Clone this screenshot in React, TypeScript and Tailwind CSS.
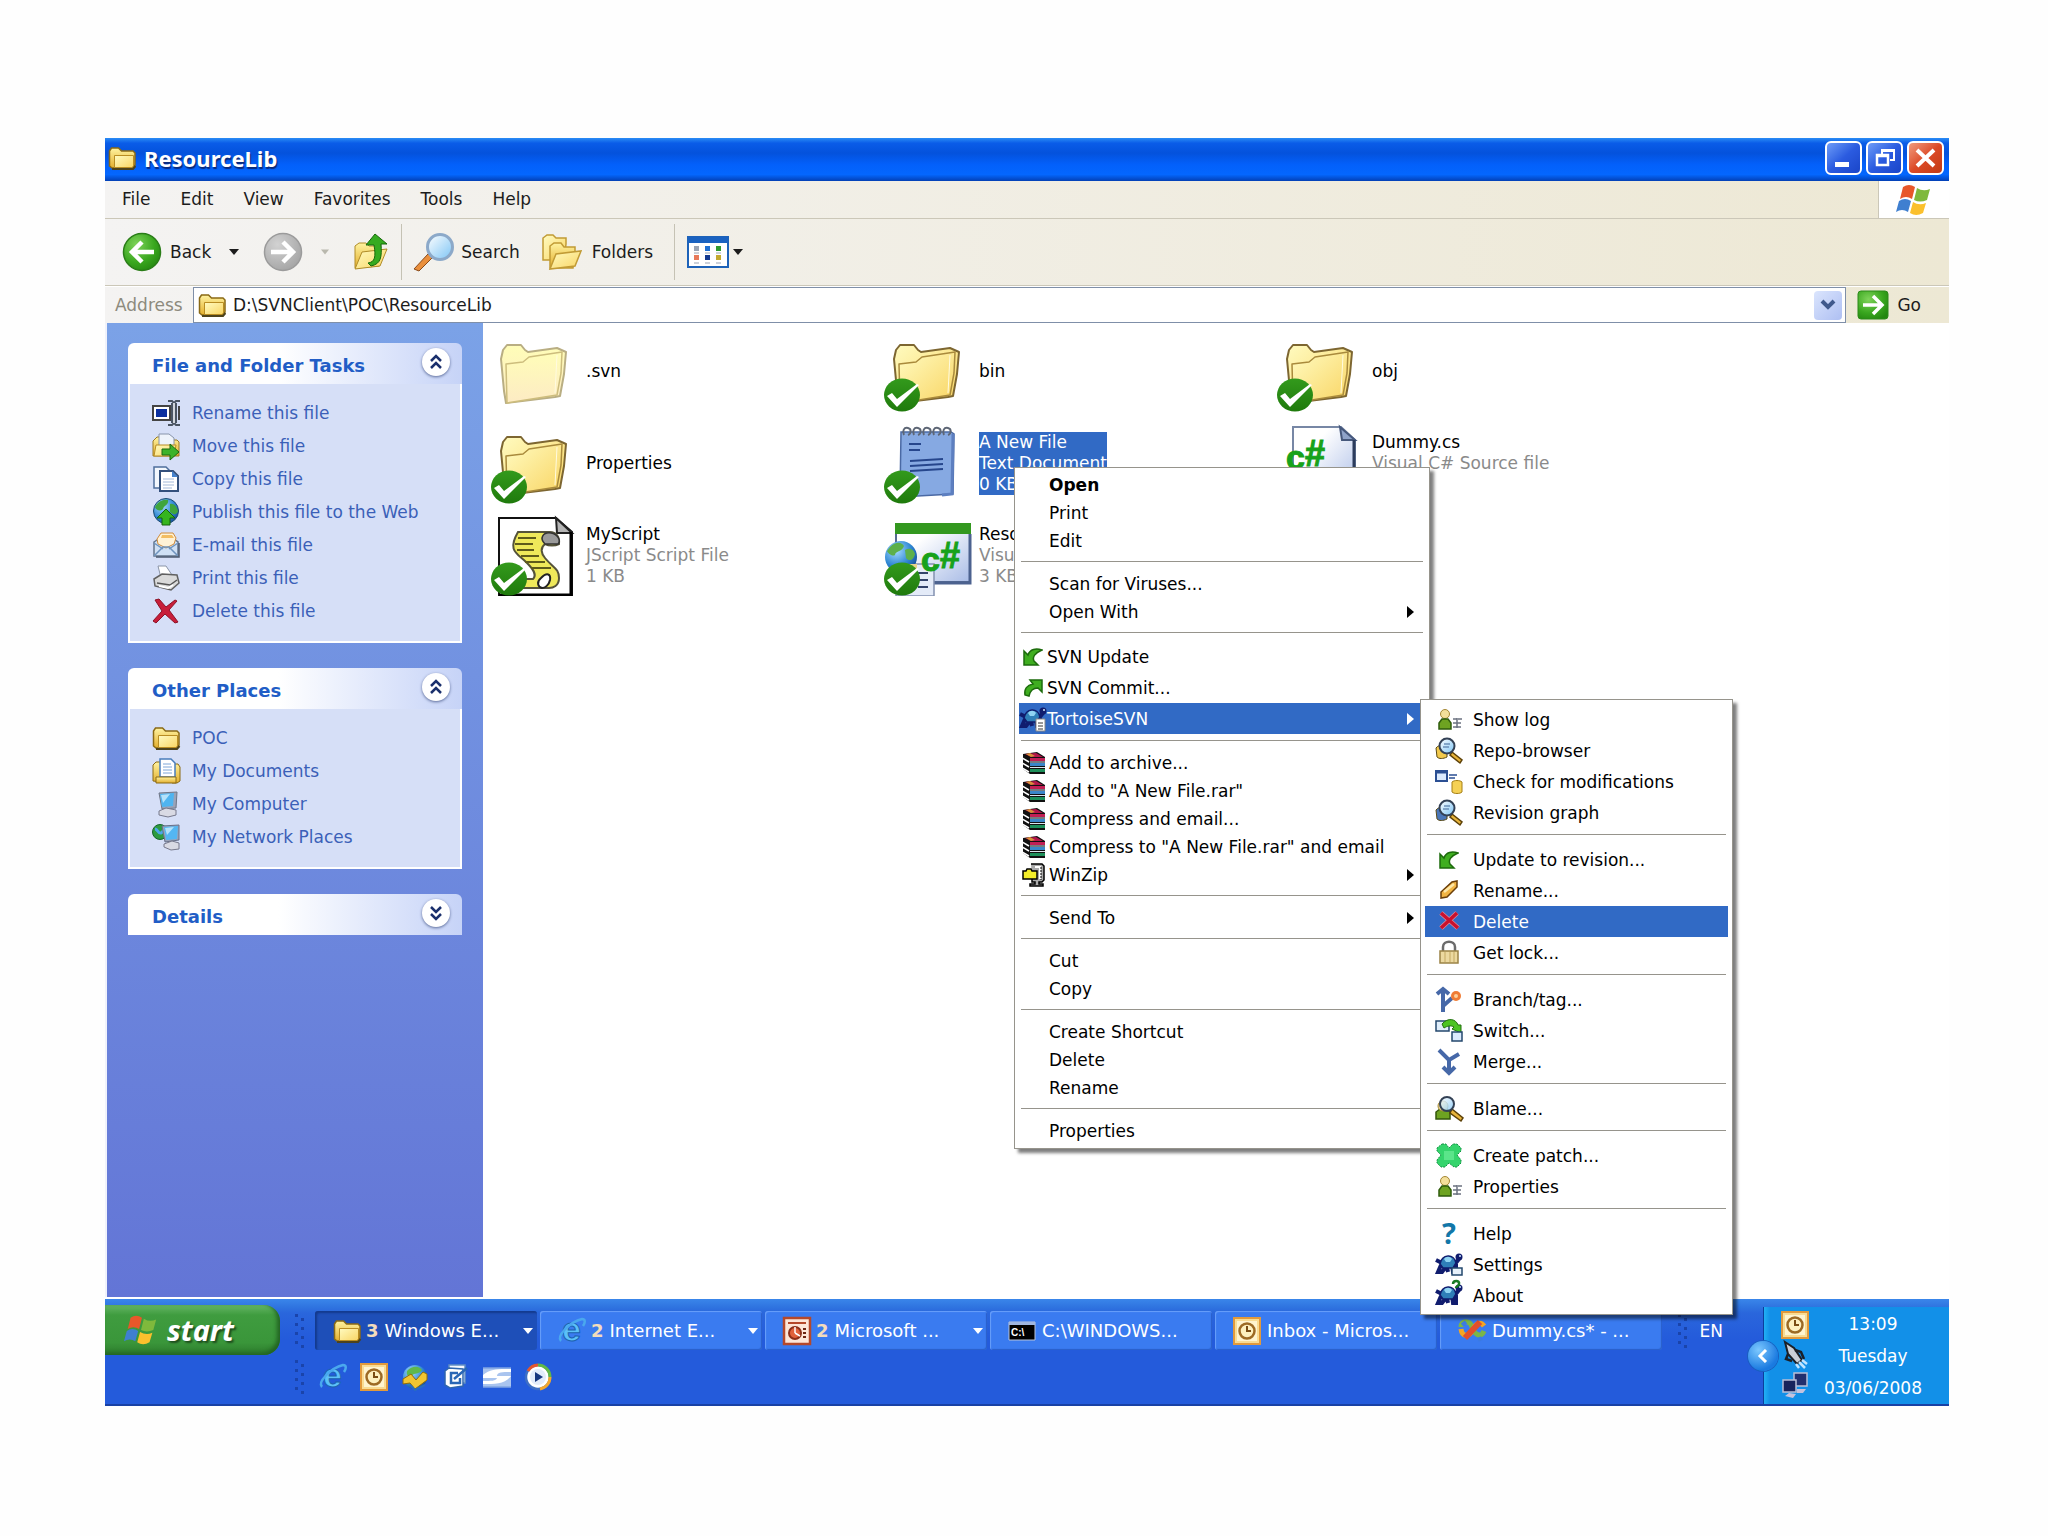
import { useState } from "react";
import type { ReactNode } from "react";

type IconProps = { className?: string };

function Svg({
	size = "0 0 28 28",
	className = "h-7 w-7 shrink-0 overflow-visible",
	children,
}: {
	size?: string;
	className?: string;
	children: ReactNode;
}) {
	return (
		<svg viewBox={size} className={className} fill="none" aria-hidden="true">
			{children}
		</svg>
	);
}

// Gradients shared by all icons
function Defs() {
	return (
		<svg className="absolute h-0 w-0" aria-hidden="true">
			<defs>
				<linearGradient id="gFolder" x1="0" y1="0" x2="1" y2="1">
					<stop offset="0" stopColor="#fffbc0" />
					<stop offset="1" stopColor="#f9d564" />
				</linearGradient>
				<linearGradient id="gPale" x1="0" y1="0" x2="0" y2="1">
					<stop offset="0" stopColor="#fffdb8" />
					<stop offset="1" stopColor="#fdebc4" />
				</linearGradient>
				<linearGradient id="gGold" x1="0" y1="0" x2="0" y2="1">
					<stop offset="0" stopColor="#fff3a0" />
					<stop offset="1" stopColor="#e3ae2c" />
				</linearGradient>
				<radialGradient id="gGreen" cx="0.35" cy="0.3" r="0.8">
					<stop offset="0" stopColor="#7fd35a" />
					<stop offset="0.6" stopColor="#3aa71f" />
					<stop offset="1" stopColor="#23860f" />
				</radialGradient>
				<radialGradient id="gGrey" cx="0.35" cy="0.3" r="0.8">
					<stop offset="0" stopColor="#d2d2d2" />
					<stop offset="1" stopColor="#a2a2a2" />
				</radialGradient>
				<linearGradient id="gCheck" x1="0" y1="0" x2="0" y2="1">
					<stop offset="0" stopColor="#339a1c" />
					<stop offset="1" stopColor="#1f7a0c" />
				</linearGradient>
				<radialGradient id="gGlobe" cx="0.35" cy="0.3" r="0.8">
					<stop offset="0" stopColor="#a7dcff" />
					<stop offset="0.6" stopColor="#2e86d2" />
					<stop offset="1" stopColor="#12468f" />
				</radialGradient>
				<linearGradient id="gLens" x1="0" y1="0" x2="1" y2="1">
					<stop offset="0" stopColor="#ffffff" />
					<stop offset="1" stopColor="#7cc4f5" />
				</linearGradient>
				<linearGradient id="gPaper" x1="0" y1="0" x2="1" y2="1">
					<stop offset="0.3" stopColor="#ffffff" />
					<stop offset="1" stopColor="#a9bce6" />
				</linearGradient>
			</defs>
		</svg>
	);
}

function SmallFolder({ className }: IconProps) {
	return (
		<Svg className={className}>
			<path d="M1.500 22V7l2-3h7l3 3h11.500l2 2V21l-2 3H4z" fill="url(#gGold)" stroke="#8a6a15" strokeWidth="1.500" />
			<path d="M6.500 11.500h19v10.500l-1.500 1.500H6.500z" fill="url(#gFolder)" stroke="#b98d22" />
			<path d="M4 25h21l2.500-3" stroke="#4d431d" strokeWidth="2" />
		</Svg>
	);
}

function BigFolder({ pale = false }: { pale?: boolean }) {
	const stroke = pale ? "#cdbd7d" : "#a98a3c";
	const fill = pale ? "url(#gPale)" : "url(#gFolder)";
	return (
		<g transform="translate(9 14)" strokeLinejoin="round">
			<path d="M1 15l2-9 4-5h14l4 5 3 2 29-4 9 4-2 22-4 22-5 1-49 6-2-12z" fill={fill} stroke={pale ? "#b9ae83" : "#7d6631"} strokeWidth="2" />
			<path d="M6 20l17-2 6-5 33-5-1 21-4 22-50 8z" fill={fill} stroke={stroke} strokeWidth="1.500" />
			<path d="M57 11l-2 38" stroke="#fffbe0" />
		</g>
	);
}

function CheckBadge() {
	return (
		<g>
			<ellipse cx="18" cy="65" rx="18" ry="16.500" fill="url(#gCheck)" />
			<path d="M3 66l5-3 5 6 20-15 2 1-22 22z" fill="#fff" />
		</g>
	);
}

function NotepadArt() {
	return (
		<g>
			<path d="M17 10h50l3 2-1 60-53 3z" fill="#86a9e2" stroke="#4a69a4" strokeWidth="1.500" />
			<path d="M69 12l-1 60-10 1" stroke="#5d7fc0" strokeWidth="3" />
			{[20, 30, 40, 50, 60].map((x) => (
				<path key={x} d={`M${x} 13c-2-4 0-8 4-7s3 6 0 7`} stroke="#5d6675" strokeWidth="2" />
			))}
			<path d="M25 22h12M25 28h11M26 39l33-2M26 44l33-2M26 49l33-2" stroke="#26468c" strokeWidth="2" />
		</g>
	);
}

function ScriptArt() {
	return (
		<g>
			<path d="M8 4h57l16 14v64H8z" fill="#fff" stroke="#111" strokeWidth="2" />
			<path d="M65 4l1 15h15z" fill="#b5b5b5" stroke="#222" strokeWidth="2" />
			<path d="M80 18v63H8" stroke="#000" strokeWidth="3" />
			<path
				d="M27 18h32c6 0 10 5 9 12-4 2-10 2-14 0-5 4-4 9 0 14 8 10 14 10 14 20 0 8-6 10-10 10H34c-6 0-8-4-6-9h14c4-4 1-9-6-16-10-10-20-12-9-31z"
				fill="#efe95a"
				stroke="#55533a"
				strokeWidth="2"
			/>
			<path d="M54 30c-6-6-2-12 6-11 7 1 10 8 7 11z" fill="#9a9a9a" stroke="#333" strokeWidth="1.500" />
			<path d="M50 64c6-6 10-4 9 2-1 5-5 8-8 8-4-1-6-6-1-10z" fill="#fff" stroke="#222" strokeWidth="2" />
			<path d="M27 24h18M24 30h18M26 36h17M30 42h18M34 48h20M40 54h20" stroke="#5f5b1a" strokeWidth="2" />
		</g>
	);
}

function CSharp({ x, y }: { x: number; y: number }) {
	return (
		<g fontWeight="bold" fill="#17a21a" stroke="#17a21a" fontFamily="Liberation Sans, sans-serif">
			<text x={x} y={y} fontSize="34">
				c
			</text>
			<text x={x + 19} y={y - 3} fontSize="36">
				#
			</text>
		</g>
	);
}

function CSharpDocArt() {
	return (
		<g>
			<path d="M16 5h48l14 13v57H16z" fill="url(#gPaper)" stroke="#7787a5" strokeWidth="2" />
			<path d="M63 5l2 13h13z" fill="#8fa3c9" stroke="#46587c" strokeWidth="2" />
			<path d="M77 18v57" stroke="#2c3c5c" strokeWidth="3" />
			<CSharp x={9} y={47} />
		</g>
	);
}

function WebProjectArt() {
	return (
		<g>
			<path d="M12 10h74v58H12z" fill="url(#gPaper)" stroke="#556a92" strokeWidth="2" />
			<path d="M11 9h76v11H11z" fill="#33981f" />
			<path d="M86 20v49H50" stroke="#4c628f" strokeWidth="3" />
			<path d="M12 50h38v32H12z" fill="#e4ebf8" stroke="#8291b0" strokeWidth="1.500" />
			<path d="M34 59h10M34 66h10M34 73h10" stroke="#33436b" strokeWidth="2" />
			<circle cx="17" cy="43" r="16" fill="url(#gGlobe)" />
			<path d="M6 33c6-6 12-5 14-1-2 6-9 5-9 9-3 2-7-2-8-4zM21 36c5-3 9 0 10 4-1 6-6 8-9 4z" fill="#5db04a" />
			<path d="M14 50h19v8H14z" fill="#e8d28c" />
			<CSharp x={37} y={57} />
		</g>
	);
}

function WindowsFlag({ className }: IconProps) {
	return (
		<Svg className={className} size="0 0 38 32">
			<path d="M8 3q6-4 12 0l-3 12q-6-4-12 0z" fill="#e8572a" />
			<path d="M22 4q6 4 13 1l-3 11q-7 3-13 0z" fill="#7fb93c" />
			<path d="M4 17q6-4 12 0l-3 11q-6-4-12 0z" fill="#3f7fd0" />
			<path d="M18 18q6 4 13 1l-3 10q-7 4-13 0z" fill="#fbc02d" />
		</Svg>
	);
}

function RenameIcon() {
	return (
		<Svg>
			<path d="M1 7h17v14H1z" fill="#fff" stroke="#444" strokeWidth="2" />
			<path d="M4 10h11v8H4z" fill="#0b2f9f" />
			<path d="M16 2h4l2 2 2-2h4M16 26h4l2-2 2 2h4M20 4v20M24 4v20" stroke="#4b5563" strokeWidth="2" />
			<path d="M22 4v20" stroke="#d1d5db" strokeWidth="2" />
			<path d="M27 7v14" stroke="#444" strokeWidth="2" />
		</Svg>
	);
}

function MoveIcon() {
	return (
		<Svg>
			<path d="M1 24V9l4-4h6l3 3h11l2 2v14z" fill="url(#gGold)" stroke="#9a7a24" />
			<path d="M7 2h10l5 4v8H7z" fill="#eef3fb" stroke="#8894aa" />
			<path d="M4 13h20l-2 11H2z" fill="url(#gFolder)" stroke="#b98d22" />
			<path d="M10 17h8v-5l9 8-9 8v-5h-8z" fill="#3cb32a" stroke="#1c6b12" />
		</Svg>
	);
}

function CopyIcon() {
	return (
		<Svg>
			<path d="M2 2h12l4 4v17H2z" fill="#f3f7fd" stroke="#4f6f9c" strokeWidth="1.500" />
			<path d="M8 6h13l5 5v15H8z" fill="#fff" stroke="#33507c" strokeWidth="2" />
			<path d="M20 6v6h6z" fill="#4583cf" />
			<path d="M11 14h11M11 17h11M11 20h11M11 23h9" stroke="#a4b9d8" />
		</Svg>
	);
}

function PublishIcon() {
	return (
		<Svg>
			<circle cx="14" cy="13" r="12.500" fill="url(#gGlobe)" stroke="#1b4a70" />
			<path d="M3 9c3-6 9-8 13-7 1 5-4 5-5 9-3 3-7 1-8-2zM18 6c4-1 7 3 8 7-1 4-5 4-8 1z" fill="#3fa53c" />
			<path d="M14 11l9 9h-5v7h-8v-7H5z" fill="#35b51f" stroke="#17600f" />
		</Svg>
	);
}

function MailIcon() {
	return (
		<Svg>
			<path d="M2 11l12-8 12 8v14H2z" fill="#cfe0f5" stroke="#64748b" strokeWidth="1.500" />
			<path d="M5 8l4-6h12l3 5-2 6-8 4-8-4z" fill="#fff2d6" stroke="#d08c3c" />
			<path d="M10 4h10l2 3H9z" fill="#f3bd62" />
			<path d="M2 25l9-9h6l9 9M2 12l9 6M26 12l-9 6" stroke="#6e93bd" strokeWidth="1.500" />
			<path d="M27 12v14H4" stroke="#4b5a70" strokeWidth="1.500" />
		</Svg>
	);
}

function PrinterIcon() {
	return (
		<Svg>
			<path d="M6 2h8l6 9-11 3z" fill="#fff" stroke="#8b95a8" />
			<path d="M2 15l8-5 15 1 2 8-8 7-16-4z" fill="#dadada" stroke="#606060" strokeWidth="1.500" />
			<path d="M5 19l13 2 7-5" stroke="#555" strokeWidth="1.500" />
			<path d="M7 22l9 2 5-3" stroke="#fff" strokeWidth="2" />
		</Svg>
	);
}

function RedCross() {
	return (
		<Svg>
			<path d="M3 3l4-1 7 8 9-7 2 1-8 9 9 12-3 1-10-9-9 9-3-2 9-10z" fill="#c81e3a" stroke="#8c1226" />
		</Svg>
	);
}

function DocumentsIcon() {
	return (
		<Svg>
			<path d="M1 24V8l3-3h6v20zM20 7h6l2 3v14l-3 2h-5z" fill="url(#gGold)" stroke="#8a6a15" />
			<path d="M8 2h11l4 4v14H8z" fill="#fff" stroke="#4a7ebc" strokeWidth="1.500" />
			<path d="M11 7h8M11 10h9M11 13h9M11 16h9" stroke="#7ea6d8" />
			<path d="M4 20h20v6H4z" fill="url(#gGold)" stroke="#8a6a15" />
		</Svg>
	);
}

function ComputerIcon() {
	return (
		<Svg>
			<path d="M7 3l18-1-1 16-14 1z" fill="#9aa3b8" stroke="#6d7688" />
			<path d="M8 4l14-1-1 13-11 1z" fill="#4fb4f0" />
			<path d="M9 5l9-1-7 9z" fill="#b4e2fb" />
			<path d="M7 21l7-3 10 2v5l-8 2-9-2z" fill="#d9dae4" stroke="#77798c" />
		</Svg>
	);
}

function NetworkIcon() {
	return (
		<Svg>
			<circle cx="8" cy="9" r="7.500" fill="#2d9b3f" stroke="#14632a" />
			<path d="M3 6c3 0 3 5 6 4s2-5 5-6" stroke="#4ba7e8" strokeWidth="3" />
			<path d="M10 3l17-1v15l-14 2z" fill="#9aa3b8" stroke="#66708a" />
			<path d="M12 4l14-1-1 13-11 1z" fill="#54b6f2" />
			<path d="M13 5l9-1-7 8z" fill="#b4e2fb" />
			<path d="M12 21l8-3 7 2v6l-8 1-7-3z" fill="#d9dae4" stroke="#77798c" />
		</Svg>
	);
}

function Magnifier({ tone }: { tone: string }) {
	return (
		<Svg>
			<path d="M1 11c3-4 9-3 11-1v10c-4 2-8 2-10 0z" fill={tone} stroke="#5b4a14" />
			<path d="M17 15l10 8-2 3-10-8z" fill="#e8b53c" stroke="#5d4108" strokeWidth="1.500" />
			<circle cx="12" cy="9" r="7.500" fill="url(#gLens)" stroke="#334155" strokeWidth="2" />
			<path d="M9 7h6M8 10h6" stroke="#6b8fb8" strokeWidth="1.500" />
		</Svg>
	);
}

function BlameIcon() {
	return (
		<Svg>
			<path d="M1 24v-7l4-3h7l3 3v7z" fill="#6ea321" stroke="#35570c" strokeWidth="1.500" />
			<circle cx="8" cy="11" r="5" fill="#f3df9a" stroke="#a48735" />
			<path d="M17 14l11 9-2 3-11-8z" fill="#e8b53c" stroke="#5d4108" strokeWidth="1.500" />
			<circle cx="12" cy="9" r="7" fill="url(#gLens)" fillOpacity="0.8" stroke="#334155" strokeWidth="2" />
		</Svg>
	);
}

function UpdateArrow() {
	return (
		<Svg className="h-5 w-5 shrink-0" size="0 0 20 20">
			<path d="M1 4v14h14l-4-4c-2-4 1-8 8-11-6-2-12-1-14 5z" fill="#3fae20" stroke="#1d6b0c" strokeWidth="1.500" />
		</Svg>
	);
}

function CommitArrow() {
	return (
		<Svg className="h-5 w-5 shrink-0" size="0 0 20 20">
			<path d="M7 2h12v12l-4-4c-5 0-8 3-9 8L2 17C1 11 4 7 10 6z" fill="#3fae20" stroke="#1d6b0c" strokeWidth="1.500" />
		</Svg>
	);
}

function PersonIcon() {
	return (
		<Svg>
			<circle cx="10" cy="8" r="4.500" fill="#f3df9a" stroke="#a48735" />
			<path d="M4 23v-6l3-4h6l3 4v6z" fill="#6ea321" stroke="#2f5c0c" strokeWidth="1.500" />
			<path d="M18 13h4M23 13h4M18 17h8M18 21h8M22 12v10" stroke="#6b7280" strokeWidth="1.500" />
		</Svg>
	);
}

function ModificationsIcon() {
	return (
		<Svg>
			<path d="M1 3h11v10H1z" fill="#dbeafe" stroke="#2b4f93" strokeWidth="2" />
			<path d="M1 4h11" stroke="#2b4f93" strokeWidth="3" />
			<path d="M14 7h8M14 10h6" stroke="#2b4f93" strokeWidth="1.500" />
			<path d="M17 14c2-2 8-2 10 0v10c-2 2-8 2-10 0z" fill="#f5d155" stroke="#a57f16" />
		</Svg>
	);
}

function PencilIcon() {
	return (
		<Svg>
			<path d="M6 15L17 5l5-1v6L12 20l-6 1z" fill="#f2b544" stroke="#6b3f0a" strokeWidth="1.500" />
			<path d="M9 15L19 7" stroke="#fde7a8" strokeWidth="2.500" />
		</Svg>
	);
}

function DeleteMark() {
	return (
		<Svg>
			<path d="M6 5l17 15M22 5L6 20" stroke="#e08a98" strokeWidth="5" />
			<path d="M6 5l17 15M22 5L6 20" stroke="#c8102e" strokeWidth="3.500" />
		</Svg>
	);
}

function LockIcon() {
	return (
		<Svg>
			<path d="M8 13V8c0-7 12-7 12 0v5" stroke="#6b6b6b" strokeWidth="2.500" />
			<path d="M5 12h18v12H5z" fill="#ecd9a0" stroke="#9a8246" strokeWidth="1.500" />
			<path d="M10 13v10M15 13v10M19 13v10" stroke="#c4a962" />
		</Svg>
	);
}

function BranchIcon() {
	return (
		<Svg>
			<path d="M8 26V4M2 8l6-5 6 5M8 20l9-8" stroke="#4668a8" strokeWidth="4" />
			<circle cx="21" cy="10" r="5" fill="#f07c34" />
			<circle cx="21" cy="10" r="2" fill="#fcd09a" />
		</Svg>
	);
}

function SwitchIcon() {
	return (
		<Svg>
			<path d="M1 4h13v10H1z" fill="#e0eefb" stroke="#24486d" strokeWidth="1.500" />
			<path d="M7 7c6-7 14-5 16 1h3v8l-9-4 2-2c-3-2-7-1-10 1z" fill="#4cc423" stroke="#22700f" />
			<path d="M17 15h10v9H17z" fill="#dbeafe" stroke="#24486d" strokeWidth="1.500" />
		</Svg>
	);
}

function MergeIcon() {
	return (
		<Svg>
			<path d="M4 2l10 10 10-6M14 11v13M8 19l6 6 6-6" stroke="#4668a8" strokeWidth="4" />
		</Svg>
	);
}

function PatchIcon() {
	return (
		<Svg>
			<path
				d="M7 2h4l3 4 4-4h4l4 4v3l-4 4 4 5v3l-4 4h-3l-5-4-4 4H6l-4-4v-3l4-5-4-4V6z"
				fill="#35d46c"
				stroke="#149344"
				strokeDasharray="2 1"
			/>
			<path d="M9 9h10v9H9z" fill="#5be58a" />
		</Svg>
	);
}

function HelpIcon() {
	return (
		<Svg>
			<text x="7" y="24" fontSize="29" fontWeight="bold" fill="#1277a8" fontFamily="Noto Sans, sans-serif">
				?
			</text>
		</Svg>
	);
}

function Turtle({ extra }: { extra?: "page" | "window" | "help" }) {
	return (
		<Svg>
			<path d="M1 9l6 3M24 8l-4 5M6 14l-3 7h4l3-4M12 16l1 5M17 14l1 7h3v-8" stroke="#101c6e" strokeWidth="4" />
			<circle cx="24" cy="6" r="3.500" fill="#101c6e" />
			<circle cx="25" cy="5" r="1" fill="#cfe9ff" />
			<path d="M5 13c2-10 14-11 16-1l-3 5H8z" fill="#2f7fb8" stroke="#101c6e" strokeWidth="1.500" />
			<path d="M9 8c2-3 6-3 8 0l-2 3h-4z" fill="#8fd3f2" />
			{extra === "page" && <path d="M17 14h9v12h-9z" fill="#fff" stroke="#888" />}
			{extra === "page" && <path d="M19 18h5M19 21h5M19 24h5" stroke="#333" />}
			{extra === "window" && <path d="M17 17h10v7H17z" fill="#e7f1fb" stroke="#24486d" strokeWidth="1.500" />}
			{extra === "help" && <path d="M18 2c0-4 7-4 6 0 0 2-3 2-3 4" stroke="#167a24" strokeWidth="2.500" />}
		</Svg>
	);
}

function BooksIcon() {
	return (
		<Svg className="h-6 w-6 shrink-0" size="0 0 24 24">
			<path d="M1 3l14-2 8 5v17H8l-7-5z" fill="#111" />
			<path d="M3 3l11-1 7 4H9z" fill="#b3154a" />
			<path d="M4 3l4-1 5 3-4 1z" fill="#d9913a" />
			<path d="M8 7h15v3H8z" fill="#c21f55" />
			<path d="M8 12h15v3H8z" fill="#3a86c8" />
			<path d="M8 18h15v3H8z" fill="#1d8f5a" />
			<path d="M0 7l7 4M0 12l7 4M0 17l7 4" stroke="#fff" strokeWidth="1.500" />
			<path d="M8 16.500h15M8 11h15" stroke="#dbe6ee" />
		</Svg>
	);
}

function WinZipIcon() {
	return (
		<Svg className="h-6 w-6 shrink-0" size="0 0 24 24">
			<path d="M9 1h11l2 2v14l-2 2h-3v2h4v2H8v-2h5v-2h-3v-4" fill="#aaa" stroke="#000" strokeWidth="1.500" />
			<path d="M13 4h5v12" stroke="#fff" strokeWidth="2" />
			<path d="M19 4v13" stroke="#000" strokeDasharray="2 1" />
			<path d="M1 8h3l1-2h4l1 2h5v8H1z" fill="#f4ee2a" stroke="#000" strokeWidth="1.500" />
		</Svg>
	);
}

function InternetIcon() {
	return (
		<Svg>
			<text x="4" y="24" fontSize="34" fontWeight="bold" fill="#5cc0f8" stroke="#1b62b0" fontFamily="Liberation Sans, sans-serif">
				e
			</text>
			<path d="M3 24C-2 19 12 5 24 2c4 0 3 4 1 7" stroke="#4aa8ee" strokeWidth="2.500" />
		</Svg>
	);
}

function ClockIcon() {
	return (
		<Svg>
			<path d="M1 1h26v26H1z" fill="#f9dc93" stroke="#e29a3c" strokeWidth="2" />
			<path d="M4 4h20v20H4z" fill="#fff4cf" />
			<circle cx="14" cy="14" r="7.500" fill="#fdf0bf" stroke="#9d6a24" strokeWidth="2.500" />
			<path d="M14 9v5h4" stroke="#7a4d14" strokeWidth="2" />
		</Svg>
	);
}

function PowerPointIcon() {
	return (
		<Svg>
			<path d="M1 1h26v26H1z" fill="#fde6d8" stroke="#b5482a" strokeWidth="2.500" />
			<path d="M5 6h18" stroke="#b5482a" strokeWidth="2" />
			<circle cx="12" cy="16" r="6" fill="#e0623c" stroke="#8c2f18" strokeWidth="2" />
			<path d="M12 16V10M12 16l5 3" stroke="#fff" strokeWidth="1.500" />
			<path d="M20 12h3M20 16h3M20 20h3" stroke="#6b2412" strokeWidth="2" />
		</Svg>
	);
}

function ConsoleIcon() {
	return (
		<Svg>
			<path d="M1 5h26v18H1z" fill="#000" stroke="#b8c4d8" />
			<path d="M1 5h26v3H1z" fill="#9fb6e0" />
			<text x="3" y="19" fontSize="10" fontWeight="bold" fill="#fff" fontFamily="Liberation Sans, sans-serif">
				C:\
			</text>
		</Svg>
	);
}

function StudioIcon() {
	return (
		<Svg>
			<path d="M3 10c0-7 9-7 11 0s9 12 12 4" stroke="#7ab648" strokeWidth="5" />
			<path d="M3 12c1 8 8 8 11 2S22 3 26 9" stroke="#f5a623" strokeWidth="5" />
			<path d="M7 21L22 5" stroke="#e2502c" strokeWidth="6" />
			<path d="M4 8l4-3M24 21l-4 2" stroke="#3c7be0" strokeWidth="4" />
		</Svg>
	);
}

function GlobeArrowIcon() {
	return (
		<Svg>
			<circle cx="14" cy="14" r="12" fill="url(#gGlobe)" />
			<path d="M6 8c5-6 13-5 15-1-3 5-8 2-10 6-4 1-6-1-5-5z" fill="#5fb84c" />
			<path d="M2 16l8-5 5 6 7-8 4 2v6l-12 9-5-6-7 1z" fill="#f2c531" stroke="#8f6c0c" />
			<path d="M9 22l5 5 10-5" stroke="#2a6cc0" strokeWidth="2" />
		</Svg>
	);
}

function DesktopIcon() {
	return (
		<Svg>
			<path d="M7 2h16v18H7z" fill="#f4f8fd" stroke="#5f8dc4" strokeWidth="1.500" />
			<path d="M3 8l4-3 14 1v17l-13 2-5-3z" fill="#fff" stroke="#2f66ae" strokeWidth="1.500" />
			<path d="M16 10H9v10h9v-5M12 16L25 5" stroke="#2a67b5" strokeWidth="2.500" />
		</Svg>
	);
}

function RibbonIcon() {
	return (
		<Svg>
			<path d="M0 5h28v19H0z" fill="#a9c4ef" />
			<path d="M0 12C8 5 18 6 28 6v3c-8 0-14 0-14 4h14c-6 8-16 8-28 8v-3c8 0 13 0 14-3H0z" fill="#fff" />
			<path d="M0 5h28M0 24h28" stroke="#7fa4e4" strokeWidth="1.500" />
		</Svg>
	);
}

function MediaIcon() {
	return (
		<Svg>
			<circle cx="14" cy="14" r="12" fill="#fff" stroke="#3f6fc4" strokeWidth="2.500" />
			<path d="M4 8A12 12 0 0 1 14 2" stroke="#e4572e" strokeWidth="3" />
			<path d="M14 2a12 12 0 0 1 12 12" stroke="#62b846" strokeWidth="3" />
			<path d="M26 14a12 12 0 0 1-10 12" stroke="#f2a72e" strokeWidth="3" />
			<circle cx="14" cy="14" r="8" fill="#e3ecfa" />
			<path d="M11 9l8 5-8 5z" fill="#17377e" />
		</Svg>
	);
}

function RocketIcon() {
	return (
		<Svg>
			<path d="M4 1l9 6 8 12-5 4-9-10z" fill="#c9ced6" stroke="#1b1f27" strokeWidth="2" />
			<path d="M7 13l-2 5 6 2M14 9l6 2 3 7" stroke="#1b1f27" strokeWidth="2.500" />
			<path d="M18 21l6 6M21 19l5 4M15 23l3 4" stroke="#bfe4ff" strokeWidth="2.500" />
		</Svg>
	);
}

function MonitorsIcon() {
	return (
		<Svg>
			<path d="M13 2h13v13H13z" fill="#22306e" stroke="#b9bfd6" strokeWidth="1.500" />
			<path d="M2 9h13v12H2z" fill="#17235c" stroke="#b9bfd6" strokeWidth="1.500" />
			<path d="M16 18h9l-3 4h-6zM4 25l4-3 7 1-3 4z" fill="#c4c2de" />
		</Svg>
	);
}

function BackIcon({ disabled = false }: { disabled?: boolean }) {
	return (
		<Svg size="0 0 40 40" className="h-10 w-10 shrink-0">
			<circle cx="20" cy="20" r="18.500" fill={disabled ? "url(#gGrey)" : "url(#gGreen)"} stroke={disabled ? "#9b9b9b" : "#2a7d18"} strokeWidth="1.500" />
			<g transform={disabled ? "matrix(-1 0 0 1 40 0)" : undefined} stroke="#fff" strokeWidth="4.500">
				<path d="M20 10L10 20l10 10M11 20h21" />
			</g>
		</Svg>
	);
}

function UpIcon() {
	return (
		<Svg size="0 0 34 40" className="h-10 w-9 shrink-0">
			<path d="M1 36V14l4-3h7l3 3h10v20z" fill="url(#gGold)" stroke="#b08c28" />
			<path d="M1 37l7-17 25-3-7 17z" fill="url(#gFolder)" stroke="#b08c28" />
			<path d="M14 31c7-1 8-6 6-18h-8L21 2l12 10h-6c1 13 0 20-10 22z" fill="#35ab20" stroke="#17690b" />
		</Svg>
	);
}

function SearchIcon() {
	return (
		<Svg size="0 0 42 40" className="h-10 w-11 shrink-0">
			<path d="M15 22l4 4L6 39l-5-2z" fill="#ea8f3c" stroke="#8a4b1b" />
			<circle cx="27" cy="15" r="12.500" fill="url(#gLens)" stroke="#8ca9c9" strokeWidth="3" />
		</Svg>
	);
}

function FoldersIcon() {
	return (
		<Svg size="0 0 40 36" className="h-9 w-10 shrink-0">
			<path d="M1 26V4l4-3h6l3 3h10v6l-2 16z" fill="url(#gFolder)" stroke="#c19b35" strokeWidth="1.500" />
			<path d="M8 34V12l4-3h7l3 4h11v5l-2 16z" fill="url(#gGold)" stroke="#c19b35" strokeWidth="1.500" />
			<path d="M8 35l6-15 25-3-6 15z" fill="url(#gFolder)" stroke="#c19b35" strokeWidth="1.500" />
		</Svg>
	);
}

function ViewsIcon() {
	return (
		<Svg size="0 0 42 32" className="h-8 w-[42px] shrink-0">
			<path d="M1 1h40v30H1z" fill="#fff" stroke="#1d62b8" strokeWidth="2" />
			<path d="M1 1h40v6H1z" fill="#1a62c0" />
			{["#9aa4b4", "#1f6fd1", "#2f9a2f"].map((c, i) => (
				<path key={c} d={`M${7 + i * 11} 10h5v5h-5z`} fill={c} />
			))}
			{["#e8795a", "#12388f", "#c4a92e"].map((c, i) => (
				<path key={c} d={`M${7 + i * 11} 19h5v5h-5z`} fill={c} />
			))}
			<path d="M7 17h5M18 17h5M29 17h5M7 27h5M18 27h5M29 27h5" stroke="#9aa4b4" />
		</Svg>
	);
}

function Caret({ className }: { className: string }) {
	return (
		<Svg size="0 0 10 6" className={className}>
			<path d="M0 0h10L5 6z" fill="currentColor" />
		</Svg>
	);
}

function Grip() {
	return (
		<Svg size="0 0 10 36" className="h-9 w-[10px] shrink-0">
			{[0, 9, 18, 27].map((y) => (
				<path key={y} d={`M0 ${y + 1}h3v3h-3zM6 ${y + 5}h3v3h-3z`} fill="#1a44ab" />
			))}
		</Svg>
	);
}

const menus = ["File", "Edit", "View", "Favorites", "Tools", "Help"];

const fileTasks = [
	{ label: "Rename this file", icon: <RenameIcon /> },
	{ label: "Move this file", icon: <MoveIcon /> },
	{ label: "Copy this file", icon: <CopyIcon /> },
	{ label: "Publish this file to the Web", icon: <PublishIcon /> },
	{ label: "E-mail this file", icon: <MailIcon /> },
	{ label: "Print this file", icon: <PrinterIcon /> },
	{ label: "Delete this file", icon: <RedCross /> },
];

const otherPlaces = [
	{ label: "POC", icon: <SmallFolder /> },
	{ label: "My Documents", icon: <DocumentsIcon /> },
	{ label: "My Computer", icon: <ComputerIcon /> },
	{ label: "My Network Places", icon: <NetworkIcon /> },
];

type FileItem = { name: string; lines?: string[]; art: ReactNode; tracked?: boolean };

const files: FileItem[] = [
	{ name: ".svn", art: <BigFolder pale /> },
	{ name: "bin", art: <BigFolder />, tracked: true },
	{ name: "obj", art: <BigFolder />, tracked: true },
	{ name: "Properties", art: <BigFolder />, tracked: true },
	{ name: "A New File", lines: ["Text Document", "0 KB"], art: <NotepadArt />, tracked: true },
	{ name: "Dummy.cs", lines: ["Visual C# Source file", "1 KB"], art: <CSharpDocArt />, tracked: true },
	{ name: "MyScript", lines: ["JScript Script File", "1 KB"], art: <ScriptArt />, tracked: true },
	{ name: "ResourceLib", lines: ["Visual C# Project", "3 KB"], art: <WebProjectArt />, tracked: true },
];

type Entry = { label: string; icon?: ReactNode; arrow?: boolean; bold?: boolean };

const contextMenu: Entry[][] = [
	[{ label: "Open", bold: true }, { label: "Print" }, { label: "Edit" }],
	[{ label: "Scan for Viruses..." }, { label: "Open With", arrow: true }],
	[
		{ label: "SVN Update", icon: <UpdateArrow /> },
		{ label: "SVN Commit...", icon: <CommitArrow /> },
		{ label: "TortoiseSVN", icon: <Turtle extra="page" />, arrow: true },
	],
	[
		{ label: "Add to archive...", icon: <BooksIcon /> },
		{ label: 'Add to "A New File.rar"', icon: <BooksIcon /> },
		{ label: "Compress and email...", icon: <BooksIcon /> },
		{ label: 'Compress to "A New File.rar" and email', icon: <BooksIcon /> },
		{ label: "WinZip", icon: <WinZipIcon />, arrow: true },
	],
	[{ label: "Send To", arrow: true }],
	[{ label: "Cut" }, { label: "Copy" }],
	[{ label: "Create Shortcut" }, { label: "Delete" }, { label: "Rename" }],
	[{ label: "Properties" }],
];

const svnMenu: Entry[][] = [
	[
		{ label: "Show log", icon: <PersonIcon /> },
		{ label: "Repo-browser", icon: <Magnifier tone="#f2c94c" /> },
		{ label: "Check for modifications", icon: <ModificationsIcon /> },
		{ label: "Revision graph", icon: <Magnifier tone="#4a76b8" /> },
	],
	[
		{ label: "Update to revision...", icon: <UpdateArrow /> },
		{ label: "Rename...", icon: <PencilIcon /> },
		{ label: "Delete", icon: <DeleteMark /> },
		{ label: "Get lock...", icon: <LockIcon /> },
	],
	[
		{ label: "Branch/tag...", icon: <BranchIcon /> },
		{ label: "Switch...", icon: <SwitchIcon /> },
		{ label: "Merge...", icon: <MergeIcon /> },
	],
	[{ label: "Blame...", icon: <BlameIcon /> }],
	[
		{ label: "Create patch...", icon: <PatchIcon /> },
		{ label: "Properties", icon: <PersonIcon /> },
	],
	[
		{ label: "Help", icon: <HelpIcon /> },
		{ label: "Settings", icon: <Turtle extra="window" /> },
		{ label: "About", icon: <Turtle extra="help" /> },
	],
];

const tasks = [
	{ count: "3", label: "Windows E...", icon: <SmallFolder />, menu: true },
	{ count: "2", label: "Internet E...", icon: <InternetIcon />, menu: true },
	{ count: "2", label: "Microsoft ...", icon: <PowerPointIcon />, menu: true },
	{ label: "C:\\WINDOWS...", icon: <ConsoleIcon /> },
	{ label: "Inbox - Micros...", icon: <ClockIcon /> },
	{ label: "Dummy.cs* - ...", icon: <StudioIcon /> },
];

const quickLaunch = [
	{ label: "Internet Explorer", icon: <InternetIcon /> },
	{ label: "Outlook", icon: <ClockIcon /> },
	{ label: "Web", icon: <GlobeArrowIcon /> },
	{ label: "Show Desktop", icon: <DesktopIcon /> },
	{ label: "Editor", icon: <RibbonIcon /> },
	{ label: "Media Player", icon: <MediaIcon /> },
];

function TitleBar() {
	const button = "flex h-[34px] w-[37px] items-center justify-center rounded-md border-2 border-white";
	return (
		<header className="flex h-[43px] items-center gap-2 bg-[linear-gradient(#2a8cf5_0,#0a5ce8_12%,#0452dc_35%,#0360fb_62%,#0467fe_85%,#0340b5_100%)] pr-[5px] pb-[3px] pl-[3px]">
			<SmallFolder className="h-7 w-7 shrink-0" />
			<h1 className="flex-1 font-['Noto_Sans'] text-[22px] font-bold text-white [text-shadow:1px_2px_1px_#0a2a7a]">ResourceLib</h1>
			<div className="flex gap-1">
				<button aria-label="Minimize" className={`${button} bg-linear-to-br from-[#6f9bf7] via-[#2b5be0] to-[#1a45c8]`}>
					<Svg size="0 0 24 24" className="h-6 w-6">
						<path d="M3 16h14v5H3z" fill="#fff" />
					</Svg>
				</button>
				<button aria-label="Restore" className={`${button} bg-linear-to-br from-[#6f9bf7] via-[#2b5be0] to-[#1a45c8]`}>
					<Svg size="0 0 24 24" className="h-6 w-6">
						<path d="M9 8V4h12v10h-4M9 5h12" stroke="#fff" strokeWidth="2" />
						<path d="M4 9h11v10H4zM4 10h11" stroke="#fff" strokeWidth="2.500" />
					</Svg>
				</button>
				<button aria-label="Close" className={`${button} bg-linear-to-br from-[#f09a7c] via-[#dc4a26] to-[#c23a14]`}>
					<Svg size="0 0 24 24" className="h-6 w-6">
						<path d="M3 4l17 16M20 4L3 20" stroke="#fff" strokeWidth="4" />
					</Svg>
				</button>
			</div>
		</header>
	);
}

function Toolbar() {
	return (
		<div className="flex h-[67px] items-center border-b border-[#cbc7b8] pl-[17px]">
			<button className="flex items-center gap-2">
				<BackIcon />
				Back
			</button>
			<button aria-label="Back history" className="ml-4 p-0.5">
				<Caret className="h-1.5 w-2.5" />
			</button>
			<button aria-label="Forward" disabled className="ml-[22px]">
				<BackIcon disabled />
			</button>
			<button aria-label="Forward history" disabled className="ml-4 p-0.5 text-[#b9b8ad]">
				<Caret className="h-1.5 w-2" />
			</button>
			<button aria-label="Up" className="ml-[22px]">
				<UpIcon />
			</button>
			<div className="ml-3 h-14 w-px bg-[#c5c2b4]" />
			<button className="ml-[10px] flex items-center gap-[5px]">
				<SearchIcon />
				Search
			</button>
			<button className="ml-[22px] flex items-center gap-[10px]">
				<FoldersIcon />
				Folders
			</button>
			<div className="ml-[21px] h-14 w-px bg-[#c5c2b4]" />
			<button aria-label="Views" className="ml-3 flex items-center gap-1">
				<ViewsIcon />
				<Caret className="h-1.5 w-2.5" />
			</button>
		</div>
	);
}

function AddressBar() {
	const [path, setPath] = useState("D:\\SVNClient\\POC\\ResourceLib");
	return (
		<form className="flex h-[37px] items-center border-t border-white pr-7" onSubmit={(e) => e.preventDefault()}>
			<label htmlFor="address" className="w-[88px] pl-[10px] text-[#8d8a7d]">
				Address
			</label>
			<div className="flex h-9 flex-1 items-center border border-[#7f8fa8] bg-white pr-[3px] pl-1">
				<SmallFolder className="h-7 w-7 shrink-0" />
				<input id="address" value={path} onChange={(e) => setPath(e.target.value)} className="h-7 flex-1 pl-[7px] outline-none" />
				<button type="button" aria-label="Show addresses" className="flex h-[29px] w-7 items-center justify-center rounded-sm bg-linear-to-br from-[#dbe5fd] to-[#aebff2]">
					<Svg size="0 0 16 12" className="h-3 w-4">
						<path d="M2 2l6 6 6-6" stroke="#40598c" strokeWidth="4" />
					</Svg>
				</button>
			</div>
			<button className="ml-[11px] flex items-center gap-2">
				<Svg size="0 0 32 30" className="h-[30px] w-8">
					<rect x="1" y="1" width="30" height="28" rx="3" fill="url(#gGreen)" stroke="#2d8a1b" />
					<path d="M6 15h17M16 6l9 9-9 9" stroke="#fff" strokeWidth="3.500" />
				</Svg>
				Go
			</button>
		</form>
	);
}

function TaskPanel({ title, items }: { title: string; items?: { label: string; icon: ReactNode }[] }) {
	return (
		<section>
			<div className="flex h-[41px] items-center justify-between rounded-t-md bg-linear-to-r from-white from-45% to-[#c6d3f7] pr-3 pl-6">
				<h2 className="pt-1 text-lg font-bold text-[#215dc6]">{title}</h2>
				<button aria-label={`Toggle ${title}`} className="mb-1 flex h-7 w-7 items-center justify-center rounded-full bg-white shadow-[0_1px_3px_#5a6a98]">
					<Svg size="0 0 16 18" className={items ? "h-[18px] w-4" : "h-[18px] w-4 rotate-180"}>
						<path d="M3 8l5-5 5 5M3 15l5-5 5 5" stroke="#1a2f6c" strokeWidth="2.500" />
					</Svg>
				</button>
			</div>
			{items && (
				<ul className="border-2 border-t-0 border-white bg-[#d6dff7] pt-3 pb-[14px] pl-[22px]">
					{items.map((item) => (
						<li key={item.label}>
							<a href="#" className="flex h-[33px] items-center gap-3 text-[#3b5fb8]">
								{item.icon}
								{item.label}
							</a>
						</li>
					))}
				</ul>
			)}
		</section>
	);
}

function FileTile({ file, selected, onSelect }: { file: FileItem; selected: boolean; onSelect: () => void }) {
	return (
		<button onClick={onSelect} className="flex h-[92px] items-center gap-[7px] text-left leading-[21px]">
			<Svg size="0 0 88 82" className="h-[82px] w-[88px] shrink-0">
				{file.art}
				{file.tracked && <CheckBadge />}
			</Svg>
			<span className={selected ? "bg-[#316ac5] text-white" : "text-black"}>
				{file.name}
				{file.lines?.map((line) => (
					<span key={line} className={selected ? "block whitespace-nowrap" : "block whitespace-nowrap text-[#8a8a8a]"}>
						{line}
					</span>
				))}
			</span>
		</button>
	);
}

const menuBox = "absolute border border-[#96948c] bg-white px-1 text-black shadow-[4px_4px_3px_rgba(0,0,0,0.5)]";

function SvnMenu() {
	return (
		<div role="menu" aria-label="TortoiseSVN" className={`${menuBox} -top-1 left-full -ml-[5px] w-[313px] pt-1 pb-[3px]`}>
			{svnMenu.map((group, i) => (
				<div key={i}>
					{i > 0 && <hr className="mx-0.5 mt-1.5 mb-[9px] border-[#96948c]" />}
					{group.map((entry) => (
						<button
							key={entry.label}
							role="menuitem"
							className={`flex h-[31px] w-full items-center pl-[10px] ${entry.label === "Delete" ? "bg-[#316ac5] text-white" : ""}`}
						>
							<span className="mr-[10px] flex w-7 justify-center">{entry.icon}</span>
							{entry.label}
						</button>
					))}
				</div>
			))}
		</div>
	);
}

function ContextMenu() {
	return (
		<div role="menu" aria-label="File" className={`${menuBox} top-36 left-[531px] z-10 w-[416px] py-[3px]`}>
			{contextMenu.map((group, i) => {
				const tall = i === 2;
				return (
					<div key={i}>
						{i > 0 && <hr className="mx-0.5 mt-1.5 mb-2 border-[#96948c]" />}
						{group.map((entry) => {
							const active = entry.label === "TortoiseSVN";
							return (
								<div key={entry.label} className="relative">
									<button
										role="menuitem"
										className={`flex w-full items-center pr-[11px] ${tall ? "h-[31px]" : "h-7"} ${active ? "bg-[#316ac5] text-white" : ""} ${entry.bold ? "font-bold" : ""}`}
									>
										<span className={`flex shrink-0 justify-center ${tall ? "w-7" : "w-[30px]"}`}>{entry.icon}</span>
										<span className="flex-1 text-left whitespace-nowrap">{entry.label}</span>
										{entry.arrow && (
											<Svg size="0 0 7 12" className="h-3 w-[7px]">
												<path d="M0 0v12l7-6z" fill="currentColor" />
											</Svg>
										)}
									</button>
									{active && <SvnMenu />}
								</div>
							);
						})}
					</div>
				);
			})}
		</div>
	);
}

function Taskbar() {
	return (
		<footer className="flex h-[107px] border-b-2 border-[#1941a5] bg-[linear-gradient(#3a86ea_0,#2f74e0_8px,#2a66dc_14px,#245bdb_40px,#245bdb_100%)] text-white">
			<button className="mt-1.5 flex h-[50px] w-[175px] shrink-0 items-center gap-2 rounded-r-2xl bg-[linear-gradient(#65b665_0,#3f9c3f_20%,#3a963a_75%,#2c7a2c_100%)] pl-[18px] font-['Noto_Sans'] text-[29px] font-bold italic shadow-[inset_-3px_-2px_4px_#226322] [text-shadow:2px_2px_2px_#1d4d1d]">
				<WindowsFlag className="h-8 w-9 shrink-0" />
				start
			</button>
			<div className="flex min-w-0 flex-1 flex-col pt-3 pl-[15px]">
				<div className="flex h-10 items-center">
					<Grip />
					<div className="ml-[10px] flex min-w-0 flex-1 gap-[3px]">
						{tasks.map((task, i) => (
							<button
								key={task.label}
								className={`flex h-[39px] max-w-[222px] min-w-0 flex-1 items-center rounded-[3px] pr-1 pl-[18px] text-lg whitespace-nowrap ${i === 0 ? "bg-[#1e4fb8] shadow-[inset_2px_2px_2px_#143a8e]" : "bg-[#3a7bf0] shadow-[inset_1px_1px_1px_#6aa0fa,inset_-1px_-1px_1px_#2a5fc9]"}`}
							>
								{task.icon}
								{task.count && <span className="ml-[5px] font-bold text-[#f3dcbc]">{task.count}</span>}
								<span className="ml-[6px] flex-1 text-left">{task.label}</span>
								{task.menu && <Caret className="h-1.5 w-2.5" />}
							</button>
						))}
					</div>
					<div className="flex items-center gap-3 pr-10">
						<Grip />
						<button aria-label="Input language">EN</button>
					</div>
				</div>
				<div className="flex h-[57px] items-center">
					<Grip />
					<div className="ml-[14px] flex gap-[13px]">
						{quickLaunch.map((app) => (
							<button key={app.label} aria-label={app.label}>
								{app.icon}
							</button>
						))}
					</div>
				</div>
			</div>
			<div className="relative mt-2 flex w-[186px] shrink-0 border-l border-[#0b3f9c] bg-[linear-gradient(90deg,#22b0f5_0,#1290e8_6px,#1290e8_100%)] pl-[17px]">
				<button aria-label="Show hidden icons" className="absolute top-[34px] -left-4 flex h-[30px] w-[30px] items-center justify-center rounded-full bg-[radial-gradient(circle_at_35%_30%,#7cc8ff,#1a7ae0_70%)] shadow-[0_0_0_1px_#1a5fc0]">
					<Svg size="0 0 12 14" className="h-3.5 w-3">
						<path d="M9 1L3 7l6 6" stroke="#fff" strokeWidth="3" />
					</Svg>
				</button>
				<div className="flex flex-col gap-0.5 pt-1">
					<ClockIcon />
					<RocketIcon />
					<MonitorsIcon />
				</div>
				<div className="flex-1 pt-px pr-3 text-center leading-8">
					<p>13:09</p>
					<p>Tuesday</p>
					<p>03/06/2008</p>
				</div>
			</div>
		</footer>
	);
}

export default function App() {
	const [selected, setSelected] = useState("A New File");

	return (
		<div className="flex min-h-screen flex-col bg-[#fefefe] pt-[138px] pr-[99px] pb-[130px] pl-[105px] font-['DejaVu_Sans',sans-serif] text-[17px] leading-6 text-[#1c1c1c]">
			<Defs />
			<TitleBar />
			<div className="bg-linear-to-r from-[#f4f3f2] to-[#ede8d4]">
				<nav className="flex h-[38px] items-stretch border-b border-[#cbc7b8]">
					<ul className="flex flex-1 items-center gap-[30px] border-r border-[#cbc7b8] pb-0.5 pl-[17px]">
						{menus.map((menu) => (
							<li key={menu}>
								<button>{menu}</button>
							</li>
						))}
					</ul>
					<div className="flex w-[70px] items-center justify-center bg-white">
						<WindowsFlag className="h-8 w-[38px]" />
					</div>
				</nav>
				<Toolbar />
				<AddressBar />
			</div>
			<div className="flex flex-1 bg-white">
				<aside className="flex w-[378px] shrink-0 flex-col gap-[25px] border-l-2 border-[#f0f2fb] bg-linear-to-b from-[#7ba2e7] to-[#6375d6] px-[21px] pt-5 pb-10">
					<TaskPanel title="File and Folder Tasks" items={fileTasks} />
					<TaskPanel title="Other Places" items={otherPlaces} />
					<TaskPanel title="Details" />
				</aside>
				<main className="relative flex-1 pt-0.5 pl-2">
					<div className="grid grid-cols-[repeat(3,393px)]">
						{files.map((file) => (
							<FileTile key={file.name} file={file} selected={file.name === selected} onSelect={() => setSelected(file.name)} />
						))}
					</div>
					<ContextMenu />
				</main>
			</div>
			<div className="h-0.5 bg-white" />
			<Taskbar />
		</div>
	);
}
